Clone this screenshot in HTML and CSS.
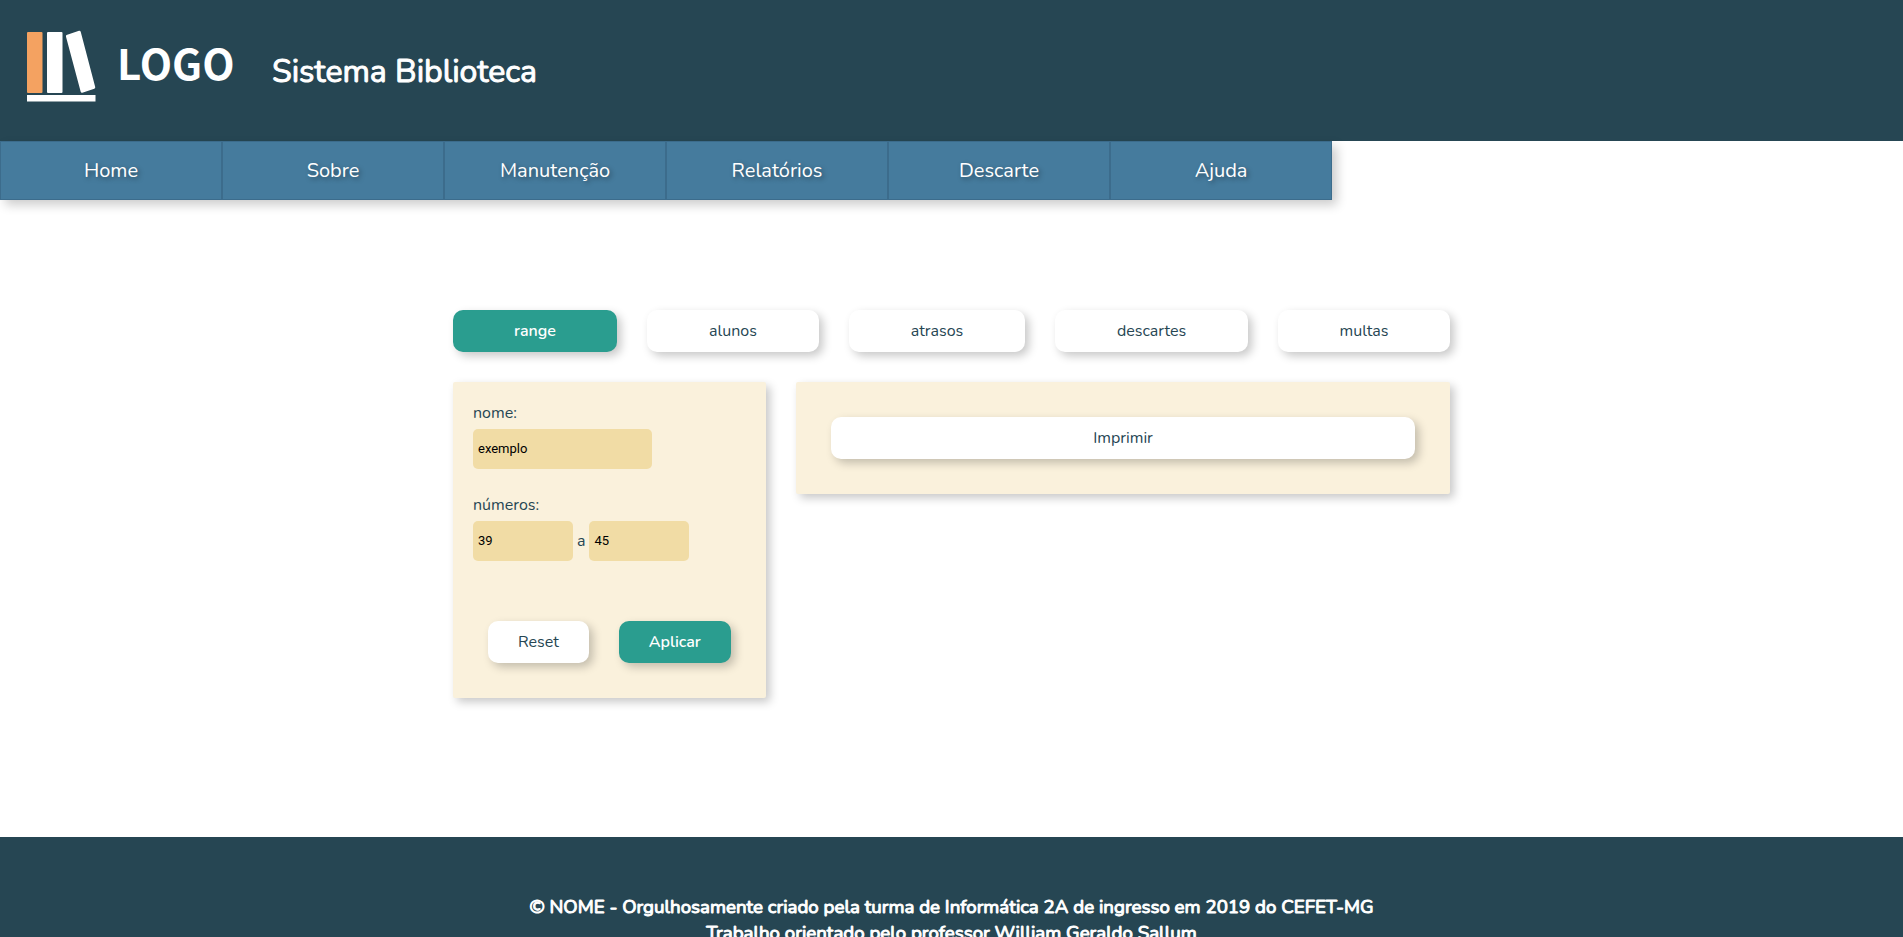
FILE: index.html
```html
<!DOCTYPE html>
<html lang="pt-BR">
<head>
<meta charset="utf-8">
<title>Sistema Biblioteca</title>
<link rel="stylesheet" href="styles.css">
</head>
<body>
<header class="header">
  <div class="logo">
    <svg class="logo-mark" viewBox="0 0 70 72" aria-hidden="true">
      <rect class="book-accent" x="0" y="2" width="15.5" height="61" rx="1"/>
      <rect class="book" x="20" y="2" width="15.5" height="61" rx="1"/>
      <path class="book" d="M39.5 5 L52 .8 Q53.3 .5 53.7 1.8 L68.2 57 Q68.5 58.3 67.3 58.8 L55.3 62.8 Q54 63.1 53.7 61.8 L39 6.7 Q38.7 5.5 39.5 5Z"/>
      <rect class="book" x="0" y="65" width="68.5" height="6.5"/>
    </svg>
    <span class="logo-text">LOGO</span>
  </div>
  <h1 class="title">Sistema Biblioteca</h1>
</header>
<nav class="nav">
  <a class="nav-link" href="#">Home</a>
  <a class="nav-link" href="#">Sobre</a>
  <a class="nav-link" href="#">Manutenção</a>
  <a class="nav-link" href="#">Relatórios</a>
  <a class="nav-link" href="#">Descarte</a>
  <a class="nav-link" href="#">Ajuda</a>
</nav>
<main class="main">
  <div class="tabs">
    <button class="btn btn-active" type="button">range</button>
    <button class="btn" type="button">alunos</button>
    <button class="btn" type="button">atrasos</button>
    <button class="btn" type="button">descartes</button>
    <button class="btn" type="button">multas</button>
  </div>
  <div class="panels">
    <form class="panel filters">
      <div class="field">
        <label for="nome">nome:</label>
        <input class="input input-name" id="nome" type="text" value="exemplo">
      </div>
      <div class="field">
        <label for="de">números:</label>
        <div class="range">
          <input class="input input-number" id="de" type="text" value="39">
          <label for="ate">a</label>
          <input class="input input-number" id="ate" type="text" value="45">
        </div>
      </div>
      <div class="actions">
        <button class="btn" type="button">Reset</button>
        <button class="btn btn-active" type="button">Aplicar</button>
      </div>
    </form>
    <section class="panel print">
      <button class="btn" type="button">Imprimir</button>
    </section>
  </div>
</main>
<footer class="footer">
  <h3 class="credits">© NOME - Orgulhosamente criado pela turma de Informática 2A de ingresso em 2019 do CEFET-MG<br>Trabalho orientado pelo professor William Geraldo Sallum</h3>
</footer>
</body>
</html>
```
FILE: styles.css
```css
* { box-sizing: border-box; }
body {
  margin: 0;
  background: #fff;
  color: #264653;
  font-family: Nunito, Lato, "Open Sans", sans-serif;
  font-size: 16px;
  line-height: 22px;
}
.header {
  display: flex;
  align-items: center;
  gap: 36px;
  height: 141px;
  padding: 0 27px 10px;
  background: #264653;
  color: #fff;
}
.logo { display: flex; align-items: center; gap: 20px; }
.logo-mark { width: 70px; height: 72px; }
.book { fill: #fff; }
.book-accent { fill: #f4a261; }
.logo-text {
  min-width: 119px;
  padding-bottom: 8px;
  font-family: "Noto Sans CJK SC", "Noto Sans", sans-serif;
  font-weight: 700;
  font-size: 42px;
  line-height: 48px;
}
.title {
  margin: 12px 0 0;
  font-size: 32px;
  line-height: 44px;
  font-weight: 400;
  -webkit-text-stroke: 1px #fff;
}
.nav {
  display: grid;
  grid-template-columns: repeat(6, 1fr);
  width: 70%;
  background: #457b9d;
  box-shadow: 5px 5px 10px rgba(0, 0, 0, .2);
}
.nav-link {
  padding: 15px 0;
  border: 1px solid #3c6c8c;
  color: #fff;
  font-size: 20px;
  line-height: 27px;
  text-align: center;
  text-decoration: none;
  text-shadow: 2px 2px 5px rgba(0, 0, 0, .4);
}
.main { width: 997px; max-width: 100%; margin: 110px auto 139px; }
.tabs {
  display: grid;
  grid-template-columns: 164fr 172fr 176fr 193fr 172fr;
  gap: 30px;
}
.btn {
  padding: 10px 30px;
  border: 0;
  border-radius: 10px;
  background: #fff;
  color: #264653;
  font: inherit;
  text-align: center;
  box-shadow: 4px 4px 10px rgba(0, 0, 0, .22);
}
.btn-active { background: #2a9d8f; color: #fff; font-weight: 600; }
.panels {
  display: grid;
  grid-template-columns: 313fr 654fr;
  align-items: start;
  gap: 30px;
  margin-top: 30px;
}
.panel {
  background: #faf1dc;
  border-radius: 2px;
  box-shadow: 4px 4px 10px rgba(0, 0, 0, .22);
}
.filters { padding: 20px 20px 35px; }
.field { display: flex; flex-direction: column; align-items: flex-start; gap: 5px; margin-bottom: 25px; }
.range { display: flex; align-items: center; gap: 4px; }
.input {
  height: 40px;
  padding: 0 5px 2px;
  border: 0;
  border-radius: 5px;
  background: #f1dca5;
  color: #000;
  font-family: Roboto, sans-serif;
  font-size: 13px;
}
.input-name { width: 179px; }
.input-number { width: 100px; }
.actions { display: flex; gap: 30px; padding: 35px 15px 0; }
.print { display: grid; padding: 35px; }
.footer {
  padding: 57px 20px;
  background: #264653;
  color: #fff;
  text-align: center;
}
.credits {
  margin: 0;
  font-weight: 400;
  line-height: 26px;
  -webkit-text-stroke: 1px #fff;
}
```
